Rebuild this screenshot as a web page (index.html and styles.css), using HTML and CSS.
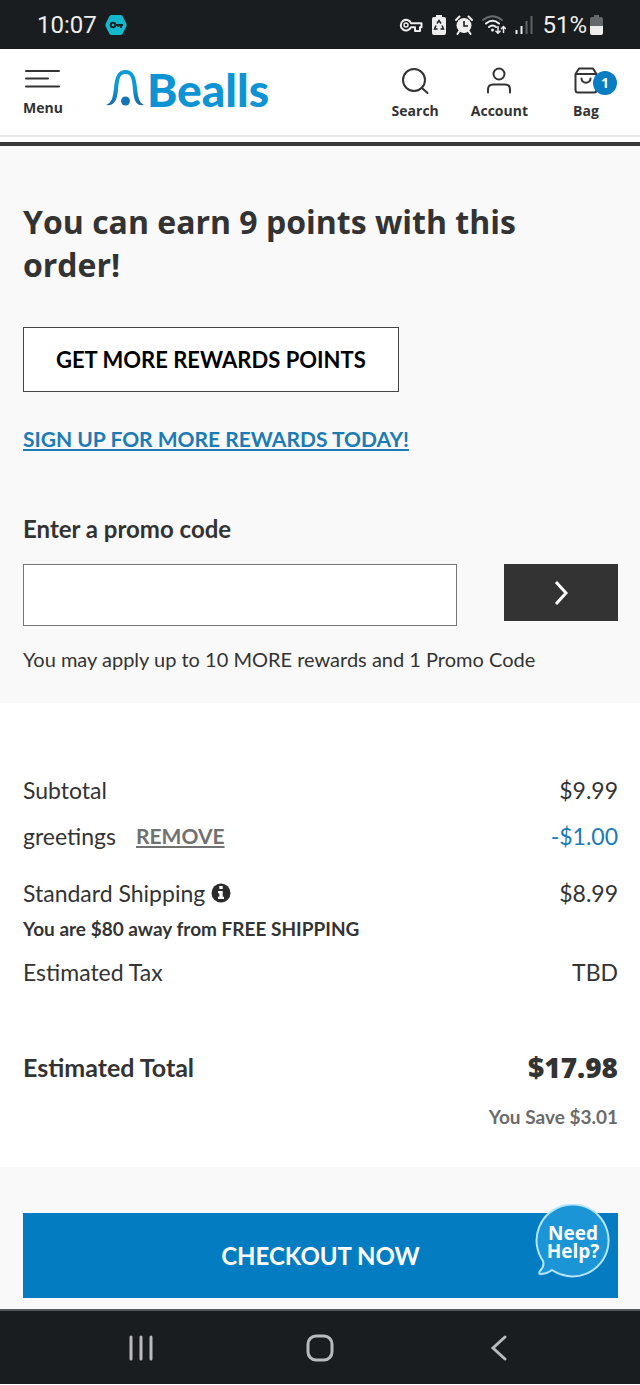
FILE: index.html
```html
<!DOCTYPE html>
<html lang="en">
<head>
<meta charset="utf-8">
<meta name="viewport" content="width=device-width, initial-scale=1">
<title>Bealls – Bag</title>
<link rel="stylesheet" href="styles.css">
</head>
<body>
<div class="status-bar">
  <div class="status-left">
    <span class="clock">10:07</span>
    <svg width="22" height="22" viewBox="0 0 22 22" aria-hidden="true">
      <path d="M6 1h10l1.5 1 4 8v2l-4 8-1.500 1H6l-1.500-1-4-8v-2l4-8z" fill="#14b8cb"/>
      <circle cx="8" cy="11" r="2.300" fill="none" stroke="#17282c" stroke-width="2"/>
      <path d="M10 11h8M16 11v3M13.500 11v2" fill="none" stroke="#17282c" stroke-width="2"/>
    </svg>
  </div>
  <div class="status-right">
    <svg width="24" height="20" viewBox="0 0 24 20" aria-hidden="true">
      <path d="M12 8.200h10.500v4H21V16h-5v-3.800h-4A5.300 5.300 0 1 1 12 8.200z" fill="none" stroke="#eee" stroke-width="2" stroke-linejoin="round"/>
      <circle cx="7" cy="10" r="2" fill="none" stroke="#eee" stroke-width="1.500"/>
    </svg>
    <svg width="14" height="20" viewBox="0 0 14 20" aria-hidden="true">
      <path d="M4 0h6v2h2q2 0 2 2v14q0 2-2 2H2q-2 0-2-2V4q0-2 2-2h2z" fill="#eee"/>
      <path d="M5 8.500l2-3 2 3M10 10.500l1.500 3.500H8.500M5.500 14h-3L4 10.500" fill="none" stroke="#1a1d20" stroke-width="1.500"/>
    </svg>
    <svg width="18" height="20" viewBox="0 0 18 20" aria-hidden="true">
      <circle cx="9" cy="10.500" r="7.500" fill="#eee"/>
      <path d="M1 5l3.500-3.500M17 5l-3.500-3.500M4 16.500L2.500 19M14 16.500l1.500 2.500" stroke="#eee" stroke-width="2" stroke-linecap="round"/>
      <path d="M9 6v5h4" fill="none" stroke="#1a1d20" stroke-width="1.600"/>
    </svg>
    <svg width="24" height="20" viewBox="0 0 24 20" aria-hidden="true">
      <g fill="none" stroke-width="2" stroke-linecap="round">
        <path d="M1 5Q10.500-2.500 20 5" stroke="#66696b"/>
        <path d="M4 8.500Q10.500 3 17 8.500M7 12q3.500-3 7 0" stroke="#eee"/>
      </g>
      <circle cx="10.500" cy="15" r="1.500" fill="#eee"/>
      <path d="M16 11v7M13.500 15.800L16 18.300l2.500-2.500M21.500 18v-6.500M19 14l2.500-2.500L24 14" fill="none" stroke="#eee" stroke-width="1.500"/>
    </svg>
    <svg width="18" height="20" viewBox="0 0 18 20" aria-hidden="true">
      <path d="M1.500 15v4M6.500 11v8" stroke="#eee" stroke-width="2"/>
      <path d="M11.500 6v13M16.500 1v18" stroke="#606366" stroke-width="2"/>
    </svg>
    <span class="battery-text">51%</span>
    <svg width="13" height="20" viewBox="0 0 13 20" aria-hidden="true">
      <path d="M4 0h5v2h2q2 0 2 2v7H0V4q0-2 2-2h2z" fill="#65686a"/>
      <path d="M0 11h13v7q0 2-2 2H2q-2 0-2-2z" fill="#eee"/>
    </svg>
  </div>
</div>

<header class="header">
  <button class="nav-item menu" type="button">
    <svg width="36" height="28" viewBox="0 0 36 28" fill="none" stroke="#333" stroke-width="2" stroke-linecap="round" aria-hidden="true"><path d="M1 5h33M1 12.500h22M1 20.500h33"/></svg>
    <span>Menu</span>
  </button>
  <a class="logo" href="#" aria-label="Bealls">
    <svg width="40" height="40" viewBox="0 0 40 40" aria-hidden="true">
      <defs><linearGradient id="arch" x1="0" y1="0" x2="0" y2="1"><stop offset="0.500" stop-color="#0e9ad7"/><stop offset="1" stop-color="#1769a6"/></linearGradient></defs>
      <path d="M1 38C7 36 8 30 9 21C10 9 13 3 20.500 3S31 9 32 21C33 30 34 36 39 38C31 39 29 34 28 23C27 11 26 7 20.500 7S14 11 13 23C12 34 9 39 1 38z" fill="url(#arch)"/>
      <circle cx="20.500" cy="34" r="4.500" fill="#1675b5"/>
    </svg>
    <span>Bealls</span>
  </a>
  <nav class="tools">
    <button class="nav-item" type="button">
      <svg width="28" height="28" viewBox="0 0 28 28" fill="none" stroke="#333" stroke-width="2" stroke-linecap="round" aria-hidden="true"><circle cx="13" cy="13" r="11"/><path d="M21 21l5.500 5"/></svg>
      <span>Search</span>
    </button>
    <button class="nav-item" type="button">
      <svg width="28" height="28" viewBox="0 0 28 28" fill="none" stroke="#333" stroke-width="2" stroke-linecap="round" aria-hidden="true"><circle cx="14" cy="7" r="5.500"/><path d="M3 25.500v-3q0-5 5-5h12q5 0 5 5v3"/></svg>
      <span>Account</span>
    </button>
    <button class="nav-item bag" type="button">
      <svg width="24" height="28" viewBox="0 0 24 28" fill="none" stroke="#333" stroke-width="2" stroke-linecap="round" stroke-linejoin="round" aria-hidden="true"><path d="M1.500 7L5 1.500h14L22.500 7v16q0 2.500-2.500 2.500H4Q1.500 25.500 1.500 23zM1.500 7h21M7.500 11.500c0 5.500 9 5.500 9 0"/></svg>
      <span>Bag</span>
      <span class="badge">1</span>
    </button>
  </nav>
</header>

<main>
  <section class="rewards">
    <h1>You can earn 9 points with this order!</h1>
    <button class="btn-outline" type="button">GET MORE REWARDS POINTS</button>
    <a class="signup" href="#">SIGN UP FOR MORE REWARDS TODAY!</a>
    <form class="promo">
      <label for="promo">Enter a promo code</label>
      <div class="promo-row">
        <input id="promo" type="text">
        <button class="apply" type="button" aria-label="Apply promo code">
          <svg width="16" height="26" viewBox="0 0 16 26" fill="none" stroke="#fff" stroke-width="3" aria-hidden="true"><path d="M3 2l10 11L3 24"/></svg>
        </button>
      </div>
      <p>You may apply up to 10 MORE rewards and 1 Promo Code</p>
    </form>
  </section>

  <section class="summary">
    <div class="row"><span>Subtotal</span><span>$9.99</span></div>
    <div class="row discount"><span class="code">greetings <button class="remove" type="button">REMOVE</button></span><span class="minus">-$1.00</span></div>
    <div class="row shipping"><span class="with-icon">Standard Shipping
      <svg width="20" height="20" viewBox="0 0 20 20" aria-hidden="true"><circle cx="10" cy="10" r="9.500" fill="#2b2b2b"/><path d="M8.300 3h3.400v3H8.300zM7 8h4.700v5.800H13V16H7v-2.200h1.300v-3.600H7z" fill="#fff"/></svg></span><span>$8.99</span></div>
    <p class="free">You are $80 away from FREE SHIPPING</p>
    <div class="row tax"><span>Estimated Tax</span><span>TBD</span></div>
    <div class="row total"><span>Estimated Total</span><strong>$17.98</strong></div>
    <p class="save">You Save $3.01</p>
  </section>

  <section class="checkout">
    <button class="btn-checkout" type="button">CHECKOUT NOW</button>
    <button class="help" type="button">
      <svg width="76" height="76" viewBox="0 0 76 76" aria-hidden="true"><path d="M17 66C12 70 8 70 5 70C4 70 4 68 5 67C8 64 9 60 8 57A36 36 0 1 1 17 66z" fill="#1c95d6" stroke="#b5e5fa" stroke-width="2"/></svg>
      <span>Need<br>Help?</span>
    </button>
  </section>
</main>

<nav class="system-nav">
  <button type="button" aria-label="Recent apps"><svg width="28" height="28" viewBox="0 0 28 28" stroke="#b9babc" stroke-width="3" stroke-linecap="round"><path d="M4 3v22M14 3v22M24 3v22"/></svg></button>
  <button type="button" aria-label="Home"><svg width="28" height="28" viewBox="0 0 28 28" fill="none" stroke="#b9babc" stroke-width="3"><rect x="2" y="2" width="24" height="24" rx="8"/></svg></button>
  <button type="button" aria-label="Back"><svg width="28" height="28" viewBox="0 0 28 28" fill="none" stroke="#b9babc" stroke-width="3" stroke-linecap="round"><path d="M20 3L8 14l12 11"/></svg></button>
</nav>
</body>
</html>
```
FILE: styles.css
```css
* { box-sizing: border-box; }

body {
  margin: 0;
  background: #fff;
  color: #333;
  font-family: "Lato", "Open Sans", sans-serif;
}

h1, p { margin: 0; }

button {
  border: 0;
  padding: 0;
  background: none;
  color: inherit;
  font: inherit;
  cursor: pointer;
}

svg { display: block; flex: none; }

.status-bar {
  display: flex;
  justify-content: space-between;
  align-items: center;
  height: 49px;
  padding: 0 37px;
  background: #1a1d20;
  color: #eee;
  font: 24px/28px "Roboto", sans-serif;
}

.status-left, .status-right { display: flex; align-items: center; gap: 8px; }
.status-right { gap: 9px; }
.battery-text { margin-right: -6px; }

.header {
  display: flex;
  align-items: flex-start;
  height: 88px;
  padding: 18px 28px 0 23px;
  border-bottom: 2px solid #e8e8e8;
}

.nav-item {
  position: relative;
  display: flex;
  flex-direction: column;
  align-items: center;
  gap: 7px;
  font: 700 14px/18px "Open Sans", sans-serif;
}

.menu { gap: 5px; margin-top: -1px; }

.logo {
  display: flex;
  gap: 2px;
  margin-left: 42px;
  color: #0e94d4;
  font-size: 46px;
  font-weight: 900;
  line-height: 46px;
  text-decoration: none;
}

.tools { display: flex; gap: 32px; margin-left: auto; }
.bag { width: 52px; }
.bag svg { height: 28px; }

.badge {
  position: absolute;
  top: 4px;
  right: -5px;
  width: 24px;
  border-radius: 12px;
  background: #0a7cc1;
  color: #fff;
  line-height: 24px;
}

.rewards {
  margin-top: 5px;
  padding: 54px 22px 30px 23px;
  border-top: 4px solid #38383b;
  background: #f9f9f9;
}

h1 {
  font: 700 32px/43px "Open Sans", sans-serif;
}

.btn-outline {
  display: block;
  height: 65px;
  margin-top: 41px;
  padding: 0 32px;
  border: 1px solid #444;
  background: #fff;
  color: #000;
  font-size: 22px;
  font-weight: 700;
}

.signup {
  display: block;
  width: fit-content;
  margin-top: 33px;
  color: #1b7bb5;
  font-size: 21px;
  font-weight: 700;
  line-height: 28px;
}

.promo { margin-top: 60px; }

.promo label {
  display: block;
  font-size: 24px;
  font-weight: 700;
  line-height: 32px;
}

.promo-row {
  display: flex;
  align-items: flex-start;
  gap: 47px;
  margin-top: 19px;
}

.promo input {
  flex: 1;
  min-width: 0;
  height: 62px;
  padding: 0 16px;
  border: 1px solid #777;
  border-radius: 0;
  background: #fff;
  font: inherit;
  font-size: 22px;
}

.apply {
  display: grid;
  place-items: center;
  width: 114px;
  height: 57px;
  background: #333;
}

.promo p {
  margin-top: 19px;
  font-size: 20px;
  line-height: 28px;
}

.summary { padding: 71px 22px 38px 23px; }

.row {
  display: flex;
  justify-content: space-between;
  font-size: 23px;
  line-height: 32px;
}

.discount { margin-top: 14px; }
.code { display: flex; gap: 20px; }
.remove { color: #717171; font-size: 21px; font-weight: 700; text-decoration: underline; }
.minus { color: #1b7bb5; }
.shipping { margin-top: 25px; }
.with-icon { display: flex; align-items: center; gap: 6px; }
.free { margin-top: 8px; font-size: 19px; font-weight: 700; line-height: 24px; }
.tax { margin-top: 15px; }
.total { margin-top: 63px; font-size: 25px; font-weight: 700; }
.total strong { font-family: "Open Sans", sans-serif; font-size: 28px; }
.save { margin-top: 22px; color: #6b6b6b; font-size: 19px; font-weight: 700; line-height: 24px; text-align: right; }

.checkout {
  position: relative;
  padding: 46px 22px 11px 23px;
  background: #f9f9f9;
}

.btn-checkout {
  display: block;
  width: 100%;
  height: 85px;
  background: #047cc2;
  color: #fff;
  font-size: 24px;
  font-weight: 700;
}

.help {
  position: absolute;
  top: 37px;
  right: 29px;
  color: #fff;
  font: 700 19px/18px "Open Sans", sans-serif;
}

.help span {
  position: absolute;
  inset: 20px 0 auto;
}

.system-nav {
  display: flex;
  justify-content: space-evenly;
  align-items: center;
  height: 75px;
  padding: 0 1px;
  border-top: 2px solid #55585a;
  background: #1a1d20;
}

.system-nav { justify-content: center; gap: 151px; }
```
